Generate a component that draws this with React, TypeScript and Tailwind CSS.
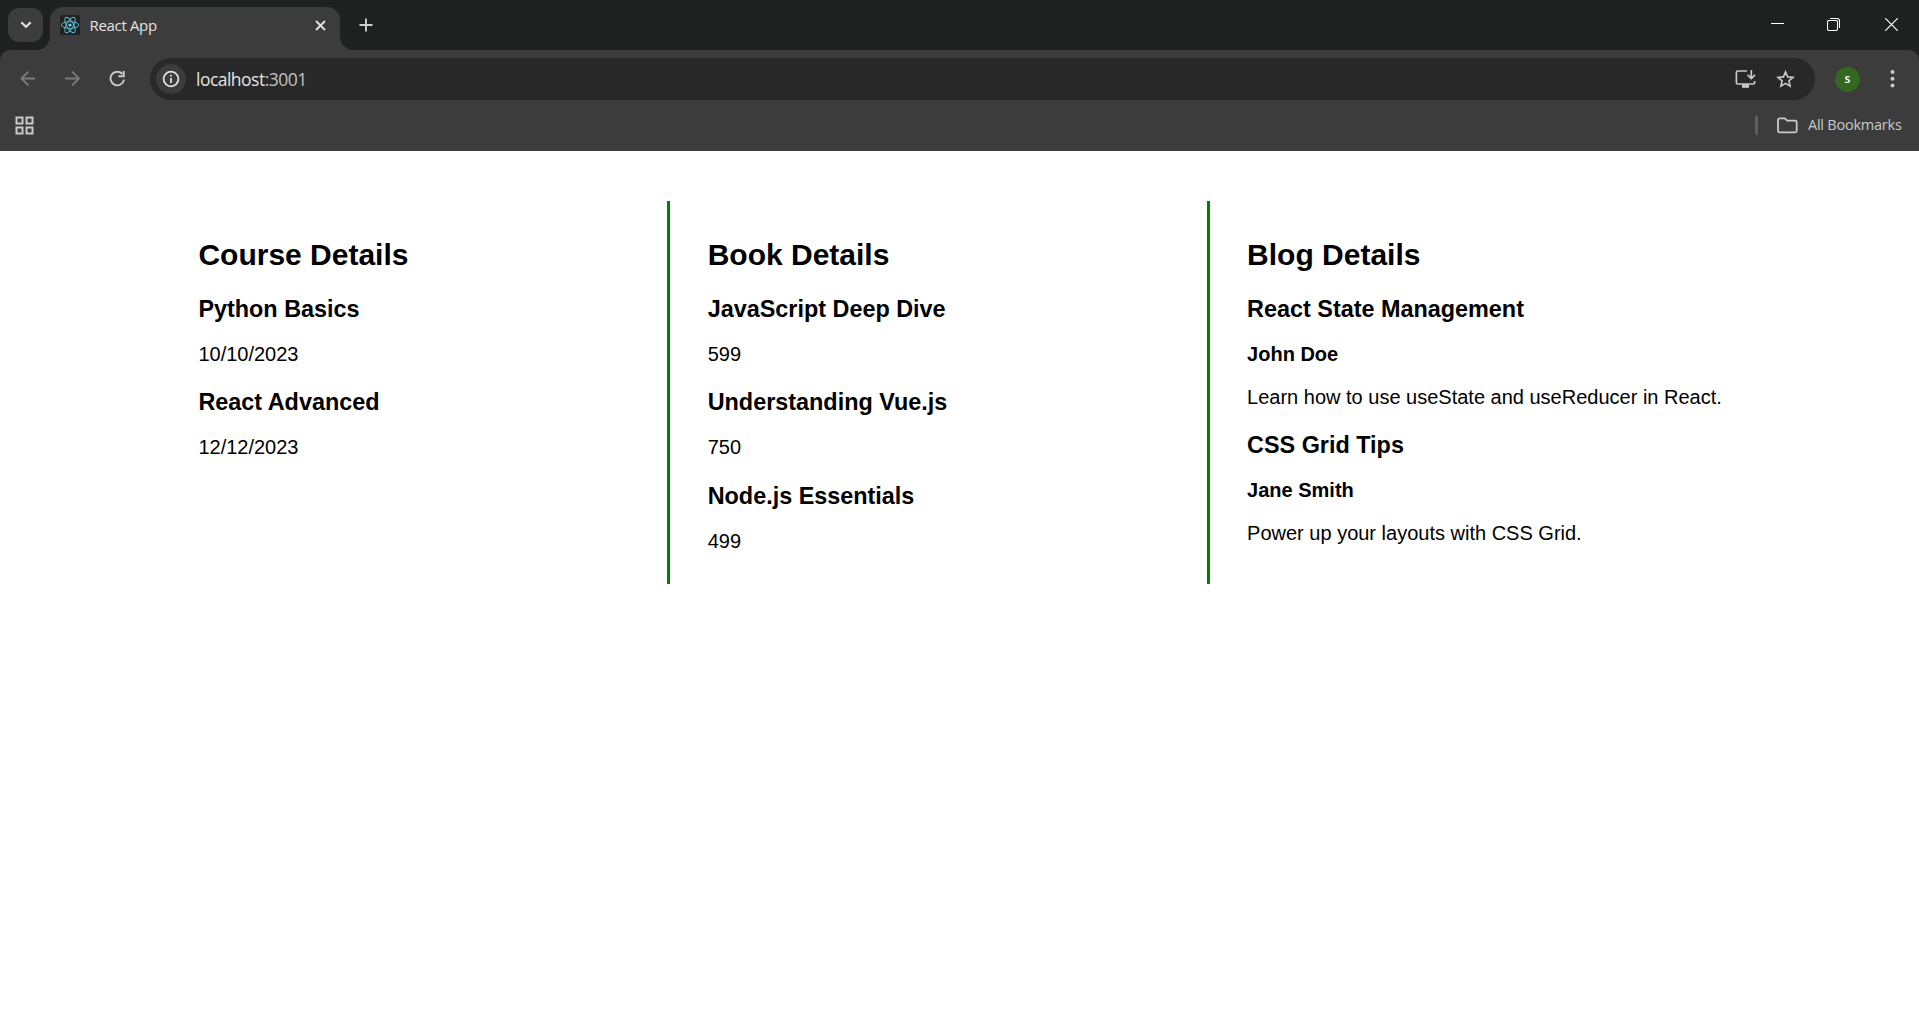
import React from "react";

const uiFont = "font-['Open_Sans',sans-serif]";

type Entry = { title: string; author?: string; text: string };

const courses: Entry[] = [
  { title: "Python Basics", text: "10/10/2023" },
  { title: "React Advanced", text: "12/12/2023" },
];

const books: Entry[] = [
  { title: "JavaScript Deep Dive", text: "599" },
  { title: "Understanding Vue.js", text: "750" },
  { title: "Node.js Essentials", text: "499" },
];

const blogs: Entry[] = [
  {
    title: "React State Management",
    author: "John Doe",
    text: "Learn how to use useState and useReducer in React.",
  },
  {
    title: "CSS Grid Tips",
    author: "Jane Smith",
    text: "Power up your layouts with CSS Grid.",
  },
];

function ReactIcon() {
  return (
    <svg width="20" height="20" viewBox="0 0 20 20" className="shrink-0">
      <rect width="20" height="20" rx="1.5" fill="#222222" />
      <g fill="none" stroke="#58bcd6" strokeWidth="0.95">
        <ellipse cx="10" cy="10" rx="8.7" ry="3.4" />
        <ellipse cx="10" cy="10" rx="8.7" ry="3.4" transform="rotate(60 10 10)" />
        <ellipse cx="10" cy="10" rx="8.7" ry="3.4" transform="rotate(120 10 10)" />
      </g>
      <circle cx="10" cy="10" r="1.6" fill="#61dafb" />
    </svg>
  );
}

function TabStrip() {
  return (
    <div className="flex h-[50px] bg-[#1f2121]">
      <div className="flex h-[50px] w-[50px] items-start pt-2 pl-2">
        <div className="flex h-[34px] w-[35px] items-center justify-center rounded-[11px] bg-[#3c3c3c]">
          <svg width="12" height="8" viewBox="0 0 12 8" fill="none" stroke="#e3e3e3" strokeWidth="2.1">
            <path d="M1.3 1.2 6 5.8 10.7 1.2" />
          </svg>
        </div>
      </div>
      <div className="relative mt-[7px] flex h-[43px] w-[290px] rounded-t-[13px] bg-[#3c3c3c] pl-[10px]">
        <svg className="absolute bottom-0 -left-[14px]" width="14" height="14" viewBox="0 0 14 14">
          <path d="M14 0v14H0A14 14 0 0 0 14 0Z" fill="#3c3c3c" />
        </svg>
        <svg className="absolute -right-[14px] bottom-0" width="14" height="14" viewBox="0 0 14 14">
          <path d="M0 0v14h14A14 14 0 0 1 0 0Z" fill="#3c3c3c" />
        </svg>
        <div className="flex h-[36px] flex-1 items-center">
          <ReactIcon />
          <span className={`${uiFont} ml-[9.5px] flex-1 text-[15px] leading-5 tracking-[-0.33px] text-[#e3e3e3]`}>
            React App
          </span>
          <svg className="mr-[14.5px]" width="11" height="11" viewBox="0 0 11 11" stroke="#e3e3e3" strokeWidth="1.8">
            <path d="M1 1 10 10M10 1 1 10" />
          </svg>
        </div>
      </div>
      <div className="flex h-[50px] items-start pt-[18px] pl-[19px]">
        <svg width="14" height="14" viewBox="0 0 14 14" stroke="#d0d0d0" strokeWidth="1.9">
          <path d="M7 .5v13M.5 7h13" />
        </svg>
      </div>
      <div className="ml-auto flex h-[48px] items-center">
        <svg className="mr-[43px]" width="13" height="13" viewBox="0 0 13 13" stroke="#fff" strokeWidth="1">
          <path d="M0 5.5h13" />
        </svg>
        <svg className="mr-[45px]" width="13" height="13" viewBox="0 0 13 13" fill="none" stroke="#fff" strokeWidth="1.1">
          <rect x=".5" y="2.5" width="10" height="10" rx="1.5" />
          <path d="M3 .5h7a2.5 2.5 0 0 1 2.5 2.5v7" />
        </svg>
        <svg className="mr-[21px]" width="13" height="13" viewBox="0 0 13 13" stroke="#fff" strokeWidth="1.2">
          <path d="M.3.3 12.7 12.7M12.7.3.3 12.7" />
        </svg>
      </div>
    </div>
  );
}

function Toolbar() {
  return (
    <div className="flex h-[58px] items-center">
      <svg className="ml-5" width="16" height="16" viewBox="0 0 16 16" fill="none" stroke="#7b7b7b" strokeWidth="1.8">
        <path d="M15 7.5H1.600M8.300.7 1.500 7.500l6.800 6.800" />
      </svg>
      <svg className="ml-[29px]" width="16" height="16" viewBox="0 0 16 16" fill="none" stroke="#7b7b7b" strokeWidth="1.8">
        <path d="M0 7.500h13.600M7.200.7 14 7.500l-6.800 6.800" />
      </svg>
      <svg className="ml-7" width="17" height="16" viewBox="0 0 17 16" fill="none" stroke="#c9c9c9" strokeWidth="1.9">
        <path d="M15 8.7A6.800 6.800 0 1 1 13.400 3" />
        <path d="M14.800 0v5.200H9.400" />
      </svg>
      <div className="ml-6 flex h-[42px] w-[1665px] items-center rounded-full bg-[#282828] pl-[6px]">
        <div className="flex h-[30px] w-[30px] items-center justify-center rounded-full bg-[#3c3c3c]">
          <svg width="18" height="18" viewBox="0 0 18 18" fill="none">
            <circle cx="9" cy="9" r="7.4" stroke="#e0e0e0" strokeWidth="1.8" />
            <path d="M9 7.900v5M9 4.800v1.800" stroke="#e0e0e0" strokeWidth="1.8" />
          </svg>
        </div>
        <span className={`${uiFont} ml-[10px] flex-1 text-[17.5px] leading-6 tracking-[-0.52px] text-[#e3e3e3]`}>
          localhost<span className="text-[#c2c2c2]">:3001</span>
        </span>
        <svg width="21" height="18" viewBox="0 0 21 18" fill="none" stroke="#c9c9c9" strokeWidth="1.7">
          <path d="M12 1H2.700Q1.400 1 1.400 2.300v10.400q0 1.300 1.300 1.300h15.600q1.300 0 1.300-1.300V11" />
          <path d="M16.300 0v8.200M12.600 4.900l3.700 3.700L20 4.900" />
          <path d="M7 14.200h7v3.600H7z" fill="#c9c9c9" stroke="none" />
        </svg>
        <svg className="mr-5 ml-5" width="19" height="18" viewBox="0 0 19 18" fill="none" stroke="#c9c9c9" strokeWidth="1.6">
          <path d="m9.500 1.900 2.100 5 5.400.5-4.100 3.500 1.200 5.300-4.600-2.800-4.600 2.800 1.200-5.300L2 7.400l5.400-.5z" />
        </svg>
      </div>
      <div className={`${uiFont} ml-5 flex h-[25px] w-[25px] items-center justify-center rounded-full bg-[#33691e] pb-px text-[12px] font-semibold text-white`}>
        s
      </div>
      <svg className="ml-[30px]" width="5" height="18" viewBox="0 0 5 18" fill="#c9c9c9">
        <circle cx="2.5" cy="2" r="2" />
        <circle cx="2.5" cy="8.7" r="2" />
        <circle cx="2.5" cy="15.4" r="2" />
      </svg>
    </div>
  );
}

function BookmarksBar() {
  return (
    <div className="flex h-[43px] items-start">
      <svg className="mt-2 ml-[15px]" width="19" height="19" viewBox="0 0 19 19" fill="none" stroke="#c9c9c9" strokeWidth="2">
        <rect x="1.5" y="1.5" width="6" height="6" />
        <rect x="11.5" y="1.5" width="6" height="6" />
        <rect x="1.5" y="11.5" width="6" height="6" />
        <rect x="11.5" y="11.5" width="6" height="6" />
      </svg>
      <div className="mt-[7px] ml-auto h-5 w-[3px] rounded-full bg-[#5e5e5e]" />
      <svg className="mt-[9px] ml-[19px]" width="21" height="17" viewBox="0 0 21 17" fill="none" stroke="#c9c9c9" strokeWidth="1.8">
        <path d="M2.5 1.400h5.300l2.400 2.300h8q1.500 0 1.500 1.500v8.600q0 1.500-1.500 1.500H2.500Q1 15.300 1 13.800V2.900q0-1.500 1.500-1.500Z" />
      </svg>
      <span className={`${uiFont} mt-[7px] mr-4 ml-[10px] w-[95px] text-[14.5px] leading-5 tracking-[-0.23px] whitespace-nowrap text-[#c9c9c9]`}>
        All Bookmarks
      </span>
    </div>
  );
}

function Column({ heading, entries }: { heading: string; entries: Entry[] }) {
  return (
    <>
      <h2 className="mt-[37px] text-[30px] leading-[33px] font-bold">{heading}</h2>
      <div className="pt-[0.3px]">
        {entries.map((e) => (
          <div key={e.title} className="pt-[24.5px]">
            <h3 className="text-[23.4px] leading-[26px] font-bold">{e.title}</h3>
            <p className={e.author ? "mt-[21px] text-xl leading-[22px] font-bold" : "mt-[21px] text-xl leading-[22px]"}>
              {e.author ?? e.text}
            </p>
            {e.author && <p className="mt-[21px] text-xl leading-[22px] whitespace-nowrap">{e.text}</p>}
          </div>
        ))}
      </div>
    </>
  );
}

export default function App() {
  return (
    <div className="flex h-[1012px] w-[1919px] flex-col overflow-hidden bg-white">
      <header className="h-[151px] bg-[#1f2121]">
        <TabStrip />
        <div className="h-[101px] rounded-t-[10px] bg-[#3c3c3c]">
          <Toolbar />
          <BookmarksBar />
        </div>
      </header>
      <main className="mt-[50px] flex h-[383px] pl-[198.4px] font-['Liberation_Sans',Arial,sans-serif] text-black">
        <section className="w-[468.6px]">
          <Column heading="Course Details" entries={courses} />
        </section>
        <section className="w-[540px] border-l-[3px] border-[#008000] pl-[37.7px]">
          <Column heading="Book Details" entries={books} />
        </section>
        <section className="border-l-[3px] border-[#008000] pl-[37.1px]">
          <Column heading="Blog Details" entries={blogs} />
        </section>
      </main>
    </div>
  );
}
